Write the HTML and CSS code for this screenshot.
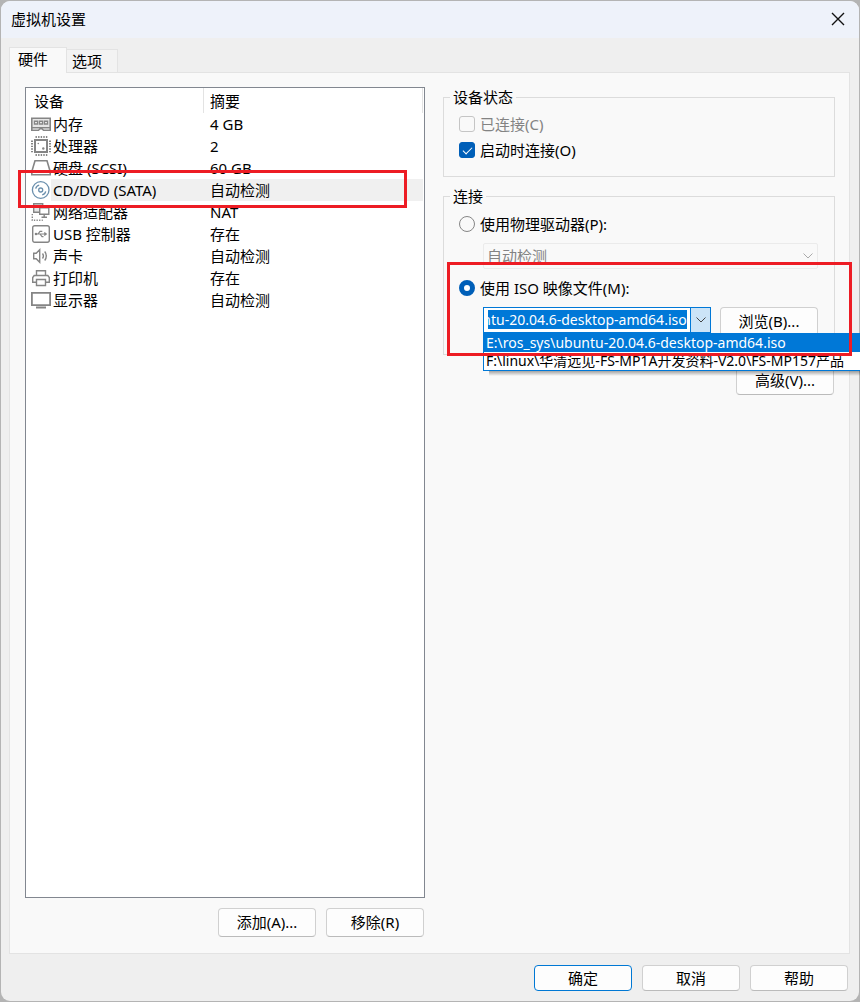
FILE: index.html
```html
<!DOCTYPE html>
<html lang="zh-CN">
<head>
<meta charset="utf-8">
<title>虚拟机设置</title>
<link rel="stylesheet" href="styles.css">
</head>
<body>
<main class="dialog">
  <header class="titlebar">
    <h1 class="title">虚拟机设置</h1>
    <button class="close" type="button" aria-label="关闭">
      <svg width="14" height="14" viewBox="0 0 14 14" fill="none" stroke="#111" stroke-width="1.4"><path d="M1 1l12 12M13 1L1 13"/></svg>
    </button>
  </header>

  <div class="tabs" role="tablist">
    <button class="tab tab-active" type="button" role="tab" aria-selected="true">硬件</button>
    <button class="tab" type="button" role="tab" aria-selected="false">选项</button>
  </div>

  <section class="panel">
    <div class="devices">
      <div class="device-list">
        <table class="device-table">
          <colgroup><col class="col-icon"><col class="col-name"><col></colgroup>
          <thead>
            <tr><th colspan="2" scope="col">设备</th><th class="head-summary" scope="col">摘要</th></tr>
          </thead>
          <tbody>
            <tr>
              <td class="icon"><svg viewBox="0 0 20 20" fill="none" stroke="#858585"><path fill="#e6e6e6" stroke-width="1.600" d="M.8 4.300h18.400v9.400H.8z"/><path fill="#fff" stroke-width="1.400" d="M3.500 7.300h3v2.700h-3zM8.500 7.300h3v2.700h-3zM13.500 7.300h3v2.700h-3z"/><path stroke-width="1.600" d="M.8 13v3.200h6.700l1.500-1.500h2l1.500 1.500h6.700V13"/></svg></td>
              <td class="name">内存</td><td>4 GB</td>
            </tr>
            <tr>
              <td class="icon"><svg viewBox="0 0 20 20" fill="none" stroke="#858585"><rect x="4" y="4" width="12" height="12" stroke-width="2"/><path stroke-width="2" stroke-dasharray="1.400 1.200" d="M4.500 1h11.800M4.500 19h11.800M1 4.500v11.800M19 4.500v11.800"/><circle cx="7.300" cy="7.500" r=".8" fill="#858585" stroke="none"/><circle cx="12.300" cy="12.500" r="1.200" fill="#858585" stroke="none"/></svg></td>
              <td class="name">处理器</td><td>2</td>
            </tr>
            <tr>
              <td class="icon"><svg viewBox="0 0 20 20" fill="none" stroke="#858585" stroke-width="1.600"><path d="M4 2.700h12l3.200 10.800v3.300H.8v-3.300zM1 13.500h18"/></svg></td>
              <td class="name">硬盘 (SCSI)</td><td>60 GB</td>
            </tr>
            <tr class="selected">
              <td class="icon"><svg viewBox="0 0 20 20" fill="none" stroke="#6a8fad" stroke-width="1.300"><circle cx="9.700" cy="10" r="8.300"/><circle cx="9.700" cy="10" r="2"/><path d="M4.700 8.700c.4-1.900 1.700-3.200 3.500-3.600M14.700 11.300c-.4 1.900-1.700 3.200-3.500 3.600"/></svg></td>
              <td class="name">CD/DVD (SATA)</td><td>自动检测</td>
            </tr>
            <tr>
              <td class="icon"><svg viewBox="0 0 20 20" fill="none" stroke="#858585" stroke-width="1.400"><path fill="#e6e6e6" d="M8 10.300H2.700V1.700h9v3"/><path fill="#fff" d="M8.700 5.700h9.100v6.500H8.700z"/><path d="M13.200 12.200v3M10.500 15.300h5.500"/><path stroke-dasharray="1.300 1.300" d="M1.300 12v6.200h10.500"/></svg></td>
              <td class="name">网络适配器</td><td>NAT</td>
            </tr>
            <tr>
              <td class="icon"><svg viewBox="0 0 20 20" fill="none" stroke="#858585" stroke-width="1.200"><rect x="1.700" y="1.700" width="16.600" height="16.600" rx="2" stroke-width="1.400"/><path d="M5 10h10M13.300 8.500l2 1.500-2 1.500M7 10l2-2.700h2.300M9 10l2 2.700h1.500"/><circle cx="5" cy="10" r=".7" fill="#858585"/></svg></td>
              <td class="name">USB 控制器</td><td>存在</td>
            </tr>
            <tr>
              <td class="icon"><svg viewBox="0 0 20 20" fill="none" stroke="#858585" stroke-width="1.400"><path d="M2.700 7.300h2.500l3.500-3.500v12.400l-3.500-3.500H2.700zM11.500 7.500c1 1.400 1 3.600 0 5M13.700 5.500c2.100 2.500 2.100 6.500 0 9"/></svg></td>
              <td class="name">声卡</td><td>自动检测</td>
            </tr>
            <tr>
              <td class="icon"><svg viewBox="0 0 20 20" fill="none" stroke="#858585" stroke-width="1.400"><path d="M5.500 7.500V2.700h9v4.800M5.500 14.300H1.700V9.500l1.500-2h13.600l1.500 2v4.800h-3.800M5.500 11.500h9v6h-9z"/></svg></td>
              <td class="name">打印机</td><td>存在</td>
            </tr>
            <tr>
              <td class="icon"><svg viewBox="0 0 20 20" fill="none" stroke="#858585" stroke-width="1.800"><path d="M.9 2.900h18.200v12.300H.9zM5 17.500h10"/></svg></td>
              <td class="name">显示器</td><td>自动检测</td>
            </tr>
          </tbody>
        </table>
      </div>
      <div class="actions">
        <button class="btn btn-tall" type="button">添加(A)...</button>
        <button class="btn btn-tall" type="button">移除(R)</button>
      </div>
    </div>

    <form class="settings">
      <fieldset class="group">
        <legend>设备状态</legend>
        <label class="option option-disabled"><input class="check" type="checkbox" disabled>已连接(C)</label>
        <label class="option"><input class="check" type="checkbox" checked>启动时连接(O)</label>
      </fieldset>

      <fieldset class="group group-connect">
        <legend>连接</legend>
        <label class="option"><input class="radio" type="radio" name="source">使用物理驱动器(P):</label>
        <div class="drive">
          <select class="drive-select" aria-label="物理驱动器" disabled><option>自动检测</option></select>
          <svg class="drive-arrow" width="10" height="6" viewBox="0 0 10 6" fill="none" stroke="#aaa"><path d="M.5.5L5 5 9.500.5"/></svg>
        </div>
        <label class="option"><input class="radio" type="radio" name="source" checked>使用 ISO 映像文件(M):</label>
        <div class="iso-row">
          <div class="combo">
            <input class="combo-input" id="iso-path" type="text" aria-label="ISO 映像文件" value="E:\ros_sys\ubuntu-20.04.6-desktop-amd64.iso">
            <button class="combo-arrow" type="button" aria-label="展开列表">
              <svg width="10" height="6" viewBox="0 0 10 6" fill="none" stroke="#444"><path d="M.5.5L5 5 9.500.5"/></svg>
            </button>
            <ul class="combo-list" role="listbox" aria-label="ISO 映像文件">
              <li class="combo-item combo-item-active" role="option" aria-selected="true">E:\ros_sys\ubuntu-20.04.6-desktop-amd64.iso</li>
              <li class="combo-item" role="option" aria-selected="false">F:\linux\华清远见-FS-MP1A开发资料-V2.0\FS-MP157产品</li>
            </ul>
          </div>
          <button class="btn btn-tall" type="button">浏览(B)...</button>
        </div>
      </fieldset>
      <button class="btn btn-tall btn-advanced" type="button">高级(V)...</button>
    </form>
  </section>

  <footer class="footer">
    <button class="btn btn-default" type="button">确定</button>
    <button class="btn" type="button">取消</button>
    <button class="btn" type="button">帮助</button>
  </footer>

  <div class="highlight highlight-device"></div>
  <div class="highlight highlight-iso"></div>
</main>
<script src="app.js"></script>
</body>
</html>
```
FILE: styles.css
```css
* { box-sizing: border-box; }

body {
  margin: 0;
  padding: 1px;
  background: #b4b4b4;
}

body, button, input, select {
  font-family: "Noto Sans", "Noto Sans CJK SC", sans-serif;
  font-size: 15px;
  line-height: 20px;
  color: #000;
}

.dialog {
  position: relative;
  display: flex;
  flex-direction: column;
  min-height: calc(100vh - 2px);
  padding-bottom: 10px;
  background: #efefef;
  border-radius: 9px;
}

.titlebar {
  display: flex;
  align-items: center;
  justify-content: space-between;
  height: 37px;
  padding: 0 14px 2px 10px;
  background: #eef2fa;
  border-radius: 9px 9px 0 0;
}

.title {
  margin: 0;
  font-size: 15px;
  font-weight: 400;
}

.close {
  display: flex;
  padding: 0;
  border: 0;
  background: none;
}

.tabs {
  display: flex;
  align-items: flex-end;
  margin: 9px 8px 0;
}

.tab {
  height: 23px;
  padding: 0 15px 0 5px;
  border: 1px solid #e3e3e3;
  border-width: 1px 1px 0 0;
  background: #f3f3f3;
}

.tab-active {
  position: relative;
  height: 26px;
  margin-bottom: -1px;
  padding: 0 18px 4px 8px;
  border-left-width: 1px;
  background: #f9f9f9;
}

.panel {
  flex: 1;
  display: grid;
  grid-template-columns: 400fr 392fr;
  gap: 18px;
  margin: 0 9px 0 8px;
  padding: 14px 14px 16px 15px;
  background: #f9f9f9;
  border: 1px solid #e3e3e3;
}

.devices {
  display: flex;
  flex-direction: column;
  gap: 10px;
  min-width: 0;
}

.device-list {
  flex: 1;
  padding-right: 1px;
  background: #fff;
  border: 1px solid #828790;
}

.device-table {
  width: 100%;
  table-layout: fixed;
  border-collapse: separate;
  border-spacing: 0;
}

.col-icon { width: 25px; }
.col-name { width: 153px; }

.device-table th {
  height: 25px;
  padding: 0 0 0 8px;
  border-right: 1px solid #e3e3e3;
  font-weight: 400;
  text-align: left;
}

.device-table td {
  height: 22px;
  padding: 0 0 0 6px;
  white-space: nowrap;
}

.device-table .head-summary { padding-left: 6px; }
.device-table .name { padding-left: 2px; }
.device-table .icon { padding: 0 0 0 5px; }

.icon svg {
  display: block;
  width: 20px;
  height: 20px;
}

.selected td:not(.icon) { background: #f0f0f0; }

.actions, .footer {
  display: flex;
  justify-content: flex-end;
  gap: 10px;
}

.actions { padding-right: 1px; }
.footer { margin: 11px 11px 0; }

.btn {
  width: 98px;
  height: 26px;
  padding: 0;
  background: #fdfdfd;
  border: 1px solid #d0d0d0;
  border-bottom-color: #bbb;
  border-radius: 4px;
}

.btn-tall {
  height: 29px;
  padding-bottom: 2px;
}

.btn-default { border-color: #0078d4; }

.settings {
  display: flex;
  flex-direction: column;
  min-width: 0;
}

.group {
  min-width: 0;
  height: 90px;
  margin: 0 0 9px;
  padding: 4px 16px 0 15px;
  border: 1px solid #dcdcdc;
}

.group-connect {
  height: 169px;
  margin-bottom: 11px;
  padding-top: 5px;
}

.group legend {
  margin-left: -9px;
  padding: 0 3px;
}

.option {
  display: flex;
  align-items: center;
  gap: 5px;
  height: 26px;
}

.option-disabled { color: #838383; }

.check, .radio {
  appearance: none;
  flex: none;
  width: 16px;
  height: 16px;
  margin: 0;
  background: #f9f9f9;
  border: 1px solid #868686;
}

.check { border-radius: 3px; }
.check:disabled { border-color: #c5c5c5; }

.check:checked {
  display: grid;
  place-items: center;
  background: #005fb8;
  border-color: #005fb8;
}

.check:checked::after {
  content: "";
  width: 8px;
  height: 4px;
  margin-bottom: 2px;
  border: solid #fff;
  border-width: 0 0 1px 1px;
  transform: rotate(-45deg);
}

.radio { border-radius: 50%; }

.radio:checked {
  border: 5px solid #005fb8;
  background: #fff;
}

.drive {
  position: relative;
  margin: 6px 0 6px 24px;
}

.drive-select {
  appearance: none;
  display: block;
  width: 100%;
  height: 26px;
  padding: 0 3px;
  background: #f9f9f9;
  border: 1px solid #ebebeb;
  border-radius: 2px;
  color: #838383;
  opacity: 1;
}

.drive-arrow {
  position: absolute;
  top: 10px;
  right: 5px;
}

.iso-row {
  display: flex;
  gap: 9px;
  margin: 6px 0 0 24px;
}

.combo {
  position: relative;
  flex: 1;
  display: flex;
  min-width: 0;
  height: 26px;
  background: #fff;
  border: 1px solid #0078d7;
}

.combo-input {
  flex: 1;
  min-width: 0;
  padding: 2px 3px 3px 4px;
  border: 0;
  outline: 0;
  background: #0078d7 content-box;
  color: #fff;
  font-size: 14px;
}

.combo-arrow {
  display: grid;
  place-items: center;
  width: 20px;
  padding: 0;
  border: 0;
  border-left: 1px solid #0078d7;
  background: #cce4f7;
}

.combo-list {
  position: absolute;
  z-index: 1;
  top: 25px;
  left: -1px;
  right: -150px;
  margin: 0;
  padding: 0;
  list-style: none;
  background: #fff;
  border: solid #0078d7;
  border-width: 1px 0 1px 1px;
}

.combo-list::after {
  content: "";
  position: absolute;
  top: 100%;
  left: 5px;
  right: 0;
  height: 5px;
  margin-top: 1px;
  background: linear-gradient(rgba(0, 0, 0, 0.35), rgba(0, 0, 0, 0));
}

.combo-item {
  height: 18px;
  padding-left: 2px;
  font-size: 14px;
  line-height: 18px;
  white-space: nowrap;
}

.combo-item-active {
  background: #0078d7;
  color: #fff;
}

.btn-advanced {
  align-self: flex-end;
  margin-right: 1px;
}

.highlight {
  position: absolute;
  z-index: 2;
  border: 3px solid #ed1c24;
  pointer-events: none;
}

.highlight-device {
  top: 169px;
  left: 17px;
  width: 389px;
  height: 38px;
}

.highlight-iso {
  top: 261px;
  left: 446px;
  width: 405px;
  height: 94px;
}
```
FILE: app.js
```js
const isoPath = document.getElementById("iso-path");
isoPath.scrollLeft = isoPath.scrollWidth;
```
